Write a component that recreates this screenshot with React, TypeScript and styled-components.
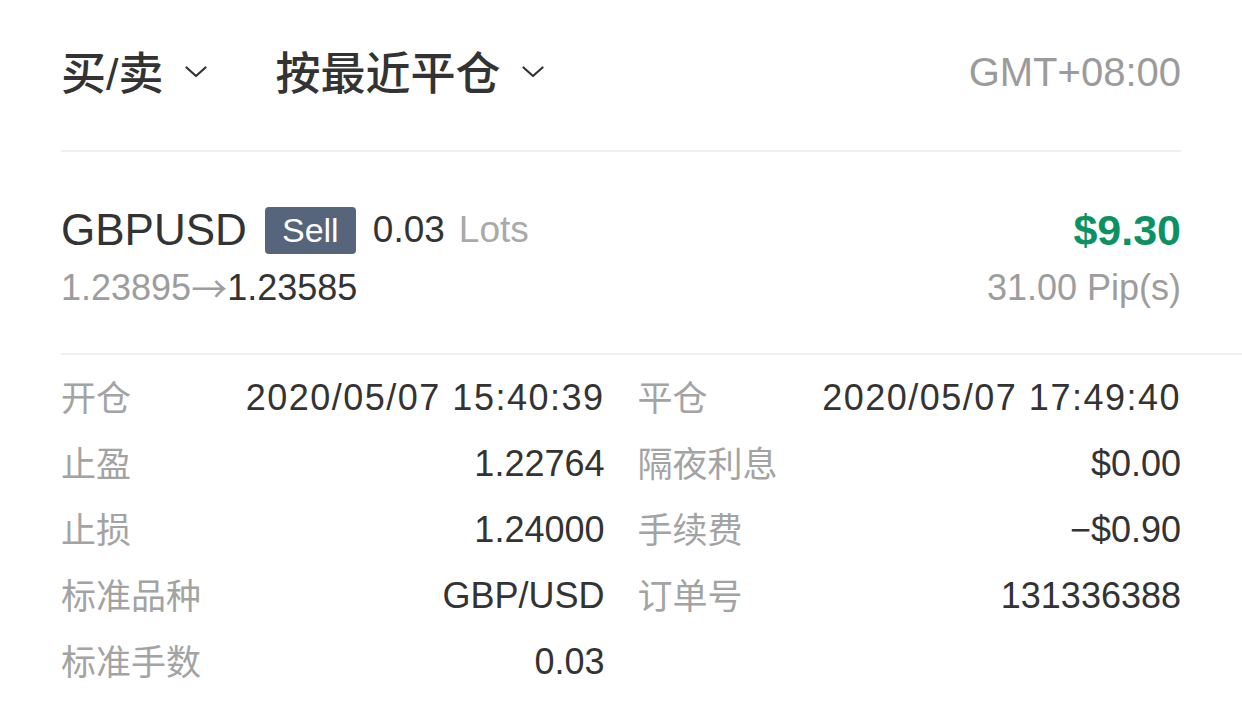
import React from "react";
import styled, { createGlobalStyle } from "styled-components";

const GlobalStyle = createGlobalStyle`
  html, body {
    margin: 0;
    padding: 0;
    background: #ffffff;
  }
  body {
    font-family: "Liberation Sans", "Noto Sans CJK SC", sans-serif;
    color: #333333;
  }
`;

const Page = styled.div`
  width: 1242px;
  padding-left: 61px;
  box-sizing: border-box;
`;

const Header = styled.div`
  height: 150px;
  padding: 0 61px 6px 0;
  box-sizing: border-box;
  display: flex;
  align-items: center;
`;

const Filter = styled.div`
  display: flex;
  align-items: center;
  gap: 21px;
  margin-right: 69px;
  font-family: "Liberation Sans", "Noto Sans CJK SC", sans-serif;
  font-size: 45px;
  font-weight: 500;
  color: #333333;
`;

const FilterText = styled.span`
  margin-bottom: 4px;
`;

const TimeZone = styled.div`
  margin-left: auto;
  font-size: 40px;
  color: #9b9b9b;
`;

const Divider = styled.div<{ $full?: boolean }>`
  height: 2px;
  background: #efefef;
  margin-right: ${(p) => (p.$full ? "0" : "61px")};
`;

const Summary = styled.div`
  padding: 53px 61px 43px 0;
  display: flex;
  flex-direction: column;
  gap: 11px;
`;

const SummaryRow = styled.div<{ $h: number }>`
  height: ${(p) => p.$h}px;
  display: flex;
  align-items: center;
`;

const Symbol = styled.span`
  font-size: 44px;
  color: #333333;
`;

const SideBadge = styled.span`
  margin-left: 18px;
  height: 47px;
  width: 91px;
  border-radius: 4px;
  background: #56647c;
  color: #ffffff;
  font-size: 34px;
  font-weight: 500;
  display: flex;
  align-items: center;
  justify-content: center;
`;

const Volume = styled.span`
  margin-left: 17px;
  font-size: 37px;
  color: #333333;
`;

const Unit = styled.span`
  margin-left: 14px;
  font-size: 37px;
  color: #a9a9a9;
`;

const Profit = styled.span`
  margin-left: auto;
  font-size: 43px;
  font-weight: 700;
  color: #0b9262;
`;

const Prices = styled.span`
  font-size: 36px;
  color: #9d9d9d;
  display: flex;
  align-items: center;
`;

const Arrow = styled.span`
  font-family: "Noto Sans CJK SC", sans-serif;
  font-size: 36px;
  line-height: 1;
  margin: 0 0 2px 0;
`;

const Strong = styled.span`
  color: #333333;
`;

const Pips = styled.span`
  margin-left: auto;
  font-size: 36px;
  color: #9d9d9d;
`;

const Details = styled.div`
  padding: 10px 61px 0 0;
  display: grid;
  grid-template-columns: 1fr 1fr;
  column-gap: 33px;
`;

const Cell = styled.div`
  height: 66px;
  display: flex;
  align-items: center;
  justify-content: space-between;
`;

const Label = styled.span`
  font-family: "Noto Sans CJK SC", sans-serif;
  font-size: 35px;
  color: #a3a3a3;
  margin-bottom: 5px;
`;

const Value = styled.span<{ $stamp?: boolean }>`
  font-size: 36px;
  color: #333333;
  letter-spacing: ${(p) => (p.$stamp ? "1.5px" : "0")};
`;

const Chevron = () => (
  <svg width="22" height="12" viewBox="0 0 22 12" fill="none">
    <polyline
      points="1.5,1.5 11,10 20.5,1.5"
      stroke="#333333"
      strokeWidth="2.2"
      strokeLinecap="round"
      strokeLinejoin="round"
    />
  </svg>
);

const rows: Array<[string, string, string?, string?]> = [
  ["开仓", "2020/05/07 15:40:39", "平仓", "2020/05/07 17:49:40"],
  ["止盈", "1.22764", "隔夜利息", "$0.00"],
  ["止损", "1.24000", "手续费", "\u2212$0.90"],
  ["标准品种", "GBP/USD", "订单号", "131336388"],
  ["标准手数", "0.03"],
];

const isStamp = (v?: string) => !!v && v.includes(":");

export default function App() {
  return (
    <>
      <GlobalStyle />
      <Page>
        <Header>
          <Filter>
            <FilterText>买/卖</FilterText>
            <Chevron />
          </Filter>
          <Filter>
            <FilterText>按最近平仓</FilterText>
            <Chevron />
          </Filter>
          <TimeZone>GMT+08:00</TimeZone>
        </Header>
        <Divider />
        <Summary>
          <SummaryRow $h={50}>
            <Symbol>GBPUSD</Symbol>
            <SideBadge>Sell</SideBadge>
            <Volume>0.03</Volume>
            <Unit>Lots</Unit>
            <Profit>$9.30</Profit>
          </SummaryRow>
          <SummaryRow $h={44}>
            <Prices>
              1.23895
              <Arrow>→</Arrow>
              <Strong>1.23585</Strong>
            </Prices>
            <Pips>31.00 Pip(s)</Pips>
          </SummaryRow>
        </Summary>
        <Divider $full />
        <Details>
          {rows.map(([l1, v1, l2, v2]) => (
            <React.Fragment key={l1}>
              <Cell>
                <Label>{l1}</Label>
                <Value $stamp={isStamp(v1)}>{v1}</Value>
              </Cell>
              <Cell>
                {l2 && <Label>{l2}</Label>}
                {v2 && <Value $stamp={isStamp(v2)}>{v2}</Value>}
              </Cell>
            </React.Fragment>
          ))}
        </Details>
      </Page>
    </>
  );
}
